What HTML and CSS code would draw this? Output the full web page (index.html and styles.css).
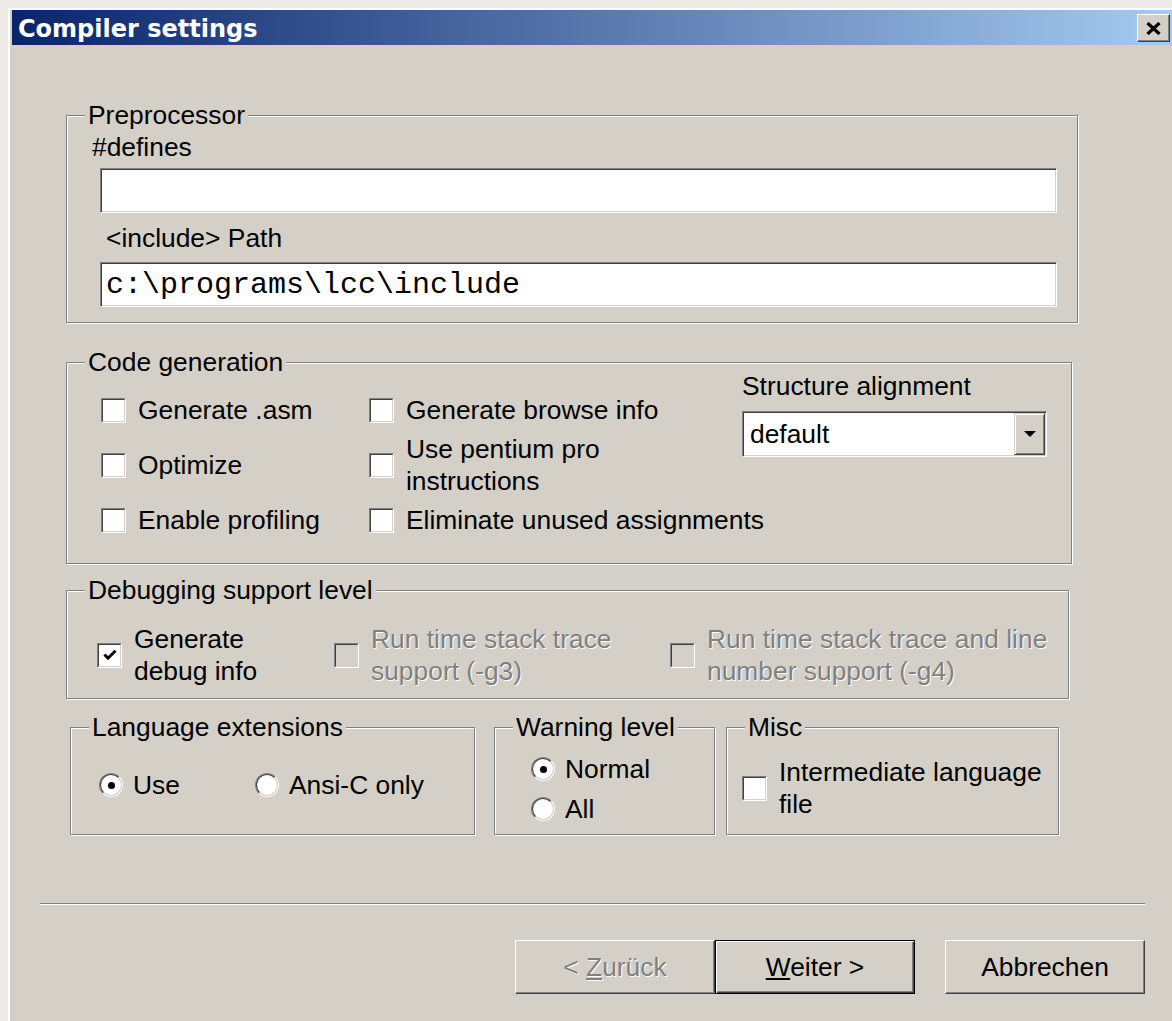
FILE: index.html
```html
<!DOCTYPE html>
<html lang="en">
<head>
<meta charset="utf-8">
<title>Compiler settings</title>
<link rel="stylesheet" href="styles.css">
</head>
<body>
<div class="window">
  <div class="titlebar">
    <span class="title">Compiler settings</span>
    <button class="close-btn" type="button" aria-label="Close">
      <svg width="15" height="13" viewBox="0 0 15 13"><path d="M1.5 1 L13.5 12 M13.5 1 L1.5 12" stroke="#000" stroke-width="3.2" fill="none"/></svg>
    </button>
  </div>

  <div class="client">
    <fieldset class="group group-pre">
      <legend>Preprocessor</legend>
      <div class="pre-body">
        <div class="field-label">#defines</div>
        <input class="field" type="text" value="" readonly>
        <div class="field-label path-label">&lt;include&gt; Path</div>
        <input class="field mono" type="text" value="c:\programs\lcc\include" readonly>
      </div>
    </fieldset>

    <fieldset class="group group-code">
      <legend>Code generation</legend>
      <div class="code-body">
        <div class="option-grid">
          <label class="check"><span class="box"><span class="box-in"></span></span><span>Generate .asm</span></label>
          <label class="check"><span class="box"><span class="box-in"></span></span><span>Generate browse info</span></label>
          <label class="check"><span class="box"><span class="box-in"></span></span><span>Optimize</span></label>
          <label class="check"><span class="box"><span class="box-in"></span></span><span>Use pentium pro<br>instructions</span></label>
          <label class="check"><span class="box"><span class="box-in"></span></span><span>Enable profiling</span></label>
          <label class="check"><span class="box"><span class="box-in"></span></span><span>Eliminate unused assignments</span></label>
        </div>
        <div class="align-field">
          <div>Structure alignment</div>
          <div class="combo">
            <span class="combo-value">default</span>
            <span class="combo-btn"><svg width="12" height="6" viewBox="0 0 12 6"><polygon points="0,0 12,0 6,6" fill="#000"/></svg></span>
          </div>
        </div>
      </div>
    </fieldset>

    <fieldset class="group group-debug">
      <legend>Debugging support level</legend>
      <div class="debug-body">
        <label class="check debug-1"><span class="box"><span class="box-in"><svg width="14" height="12" viewBox="0 0 14 12"><path d="M1.5 5.5 L5 9.2 L12.5 1.8" stroke="#000" stroke-width="3" fill="none"/></svg></span></span><span>Generate<br>debug info</span></label>
        <label class="check disabled debug-2"><span class="box"><span class="box-in"></span></span><span>Run time stack trace<br>support (-g3)</span></label>
        <label class="check disabled"><span class="box"><span class="box-in"></span></span><span>Run time stack trace and line<br>number support (-g4)</span></label>
      </div>
    </fieldset>

    <div class="group-row">
      <fieldset class="group group-lang">
        <legend>Language extensions</legend>
        <div class="lang-body">
          <label class="option lang-use"><span class="radio on"><span class="radio-in"></span></span><span>Use</span></label>
          <label class="option"><span class="radio"><span class="radio-in"></span></span><span>Ansi-C only</span></label>
        </div>
      </fieldset>
      <fieldset class="group group-warn">
        <legend>Warning level</legend>
        <div class="warn-body">
          <label class="option"><span class="radio on"><span class="radio-in"></span></span><span>Normal</span></label>
          <label class="option"><span class="radio"><span class="radio-in"></span></span><span>All</span></label>
        </div>
      </fieldset>
      <fieldset class="group group-misc">
        <legend>Misc</legend>
        <div class="misc-body">
          <label class="check"><span class="box"><span class="box-in"></span></span><span>Intermediate language<br>file</span></label>
        </div>
      </fieldset>
    </div>

    <div class="separator"></div>

    <div class="buttons">
      <button class="btn" type="button" disabled>&lt; <u>Z</u>urück</button>
      <button class="btn btn-default" type="button"><u>W</u>eiter &gt;</button>
      <button class="btn btn-cancel" type="button">Abbrechen</button>
    </div>
  </div>
</div>
</body>
</html>
```

FILE: styles.css
```css
* {
  box-sizing: border-box;
}

html,
body {
  margin: 0;
  height: 100%;
}

body {
  background: #ebeae6;
  overflow: hidden;
  font-family: "Liberation Sans", Arial, sans-serif;
  font-size: 26.4px;
  line-height: 32px;
  color: #000;
}

/* ---- window frame ---- */
.window {
  margin: 8px 0 0 8px;
  height: calc(100% - 8px);
  border-top: 2px solid #fff;
  border-left: 2px solid #fff;
  padding-left: 2px;
  background: #d4d0c8;
  display: flex;
  flex-direction: column;
}

.titlebar {
  flex: none;
  height: 35px;
  display: flex;
  align-items: center;
  justify-content: space-between;
  padding: 0 2px 0 6px;
  background: linear-gradient(to right, #0a246a, #a6caf0);
}

.title {
  color: #fff;
  font-family: "DejaVu Sans", "Liberation Sans", sans-serif;
  font-weight: bold;
  font-size: 24px;
  line-height: 28px;
  padding-top: 2px;
}

.close-btn {
  width: 33px;
  height: 28px;
  padding: 0;
  margin-top: 1px;
  display: flex;
  align-items: center;
  justify-content: center;
  background: #d4d0c8;
  border: 1px solid;
  border-color: #fff #404040 #404040 #fff;
  box-shadow: inset -1px -1px #808080;
}

.client {
  flex: 1;
  padding-left: 54px;
}

/* ---- etched group boxes ---- */
.group {
  margin: 0;
  padding: 0;
  min-width: 0;
  border: 1px solid #808080;
  box-shadow: inset 1px 1px #fff, 1px 1px #fff;
}

.group legend {
  margin-left: 18px;
  padding: 0 3px;
  line-height: 32px;
  background: #d4d0c8;
}

.group-pre {
  margin-top: 54px;
  width: 1012px;
}

.group-code {
  margin-top: 23px;
  width: 1006px;
}

.group-debug {
  margin-top: 10px;
  width: 1003px;
}

/* ---- preprocessor ---- */
.pre-body {
  padding: 0 0 15px 25px;
}

.field-label {
  height: 32px;
}

.path-label {
  margin: 9px 0 0 14px;
}

.field {
  display: block;
  width: 957px;
  height: 45px;
  margin: 5px 0 0 8px;
  padding: 0 5px;
  background: #fff;
  border: 1px solid;
  border-color: #808080 #fff #fff #808080;
  box-shadow: inset 1px 1px #404040, inset -1px -1px #d4d0c8;
  font: inherit;
  color: #000;
  outline: none;
}

.path-label + .field {
  margin-top: 8px;
}

.field.mono {
  font-family: "Liberation Mono", "Courier New", monospace;
  font-size: 30px;
}

/* ---- checkboxes and radios ---- */
.check,
.option {
  display: flex;
  align-items: center;
  gap: 12px;
  white-space: nowrap;
}

.box {
  flex: none;
  width: 25px;
  height: 25px;
  display: flex;
  border: 1px solid;
  border-color: #808080 #fff #fff #808080;
}

.box-in {
  flex: 1;
  display: flex;
  align-items: center;
  justify-content: center;
  background: #fff;
  border: 1px solid;
  border-color: #404040 #d4d0c8 #d4d0c8 #404040;
}

.check.disabled .box-in {
  background: #d4d0c8;
}

.check.disabled {
  color: #808080;
  text-shadow: 1px 1px #fff;
}

.option {
  gap: 10px;
}

.radio {
  flex: none;
  width: 24px;
  height: 24px;
  display: flex;
  border-radius: 50%;
  border: 1px solid;
  border-color: #808080 #fff #fff #808080;
}

.radio-in {
  flex: 1;
  display: flex;
  align-items: center;
  justify-content: center;
  border-radius: 50%;
  background: #fff;
  border: 1px solid;
  border-color: #404040 #d4d0c8 #d4d0c8 #404040;
}

.radio.on .radio-in::after {
  content: "";
  width: 7px;
  height: 7px;
  border-radius: 50%;
  background: #000;
}

/* ---- code generation ---- */
.code-body {
  display: flex;
  padding: 0 0 27px 34px;
}

.option-grid {
  display: grid;
  grid-template-columns: 268px 373px;
  row-gap: 7px;
  align-items: center;
  padding-top: 16px;
}

.align-field {
  width: 305px;
  margin-top: -8px;
  white-space: nowrap;
}

.combo {
  display: flex;
  height: 46px;
  margin-top: 9px;
  border: 1px solid;
  border-color: #808080 #fff #fff #808080;
  box-shadow: inset 1px 1px #404040, inset -1px -1px #d4d0c8;
  padding: 1px;
}

.combo-value {
  flex: 1;
  background: #fff;
  padding-left: 6px;
  line-height: 42px;
}

.combo-btn {
  flex: none;
  width: 31px;
  display: flex;
  align-items: center;
  justify-content: center;
  background: #d4d0c8;
  border: 1px solid;
  border-color: #d4d0c8 #404040 #404040 #d4d0c8;
  box-shadow: inset 1px 1px #fff, inset -1px -1px #808080;
}

/* ---- debugging ---- */
.debug-body {
  display: flex;
  padding: 17px 0 11px 30px;
}

.debug-1 {
  width: 237px;
}

.debug-2 {
  width: 336px;
}

/* ---- bottom row of groups ---- */
.group-row {
  display: flex;
  margin: 12px 0 0 4px;
}

.group-lang {
  width: 405px;
  margin-right: 19px;
}

.group-warn {
  width: 221px;
  margin-right: 11px;
}

.group-misc {
  width: 333px;
}

.lang-body {
  display: flex;
  padding: 26px 0 33px 28px;
}

.lang-use {
  width: 156px;
}

.warn-body {
  display: flex;
  flex-direction: column;
  gap: 8px;
  padding: 10px 0 9px 36px;
}

.misc-body {
  padding: 13px 0 14px 15px;
}

/* ---- separator and wizard buttons ---- */
.separator {
  width: 1105px;
  height: 2px;
  margin: 68px 0 0 -26px;
  border-top: 1px solid #808080;
  border-bottom: 1px solid #fff;
}

.buttons {
  display: flex;
  justify-content: flex-end;
  width: 1105px;
  margin: 35px 0 0 -26px;
}

.btn {
  width: 200px;
  height: 54px;
  padding: 0;
  font: inherit;
  color: #000;
  background: #d4d0c8;
  border: 1px solid;
  border-color: #fff #404040 #404040 #fff;
  box-shadow: inset -1px -1px #808080;
}

.btn:disabled {
  color: #808080;
  text-shadow: 1px 1px #fff;
}

.btn-default {
  border: 1px solid #000;
  box-shadow: inset 1px 1px #fff, inset -1px -1px #404040, inset -2px -2px #808080;
}

.btn-cancel {
  margin-left: 30px;
}
```
